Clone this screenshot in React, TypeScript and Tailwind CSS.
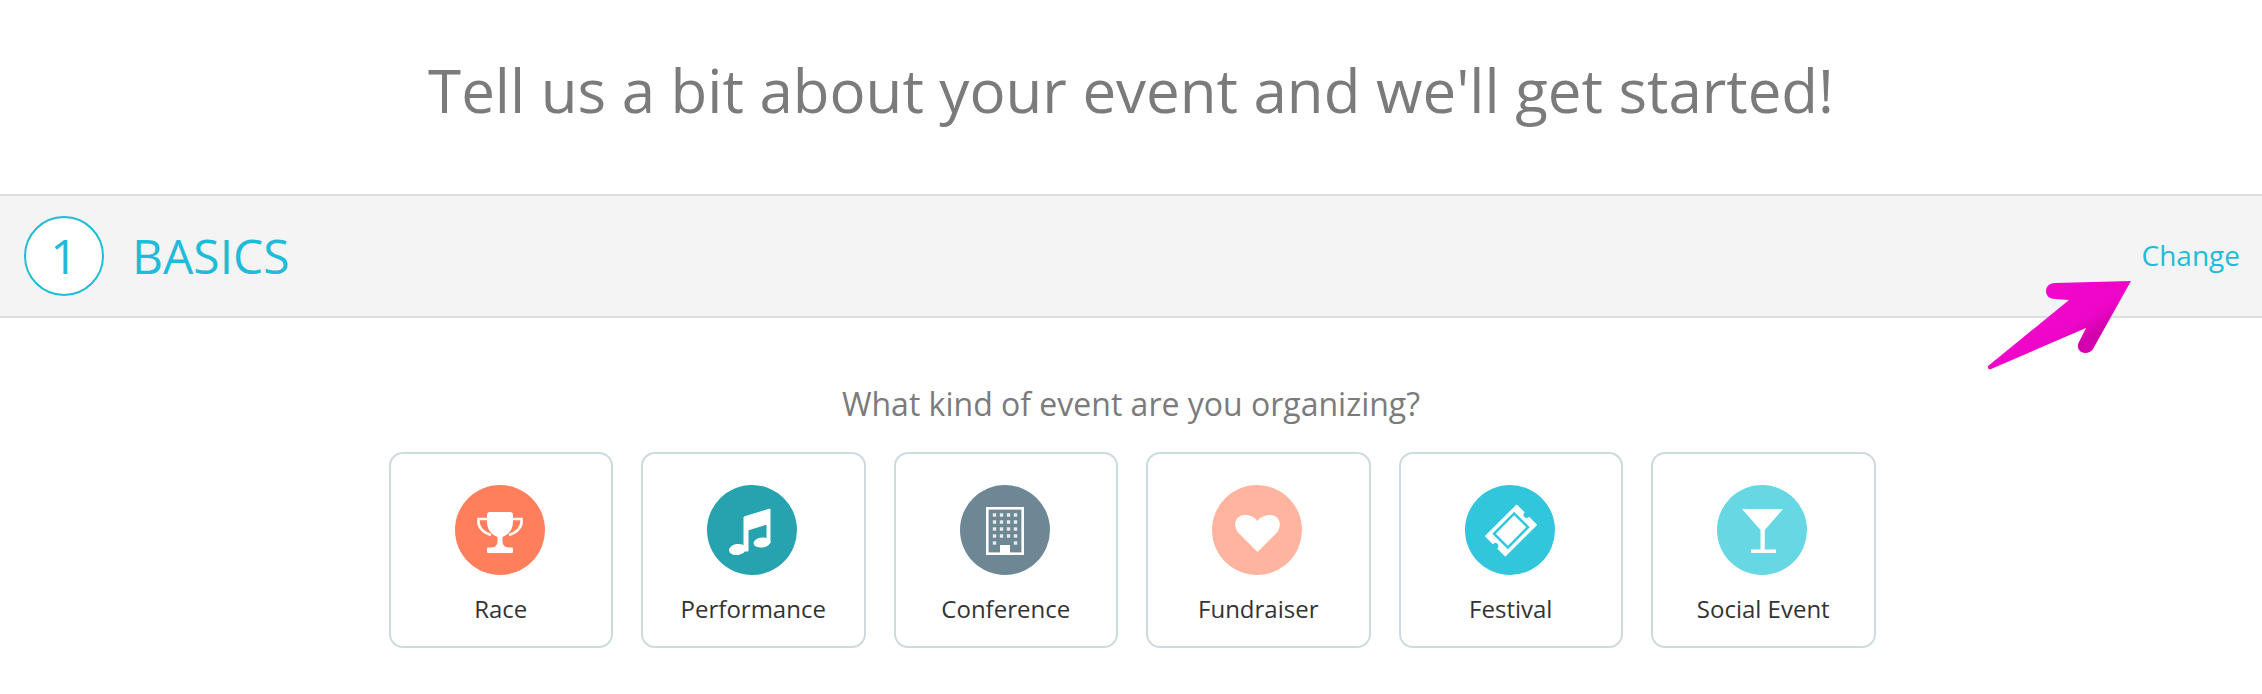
const F = "font-['Open_Sans',sans-serif]";

function Trophy() {
  return (
    <svg viewBox="0 0 90 90" className="h-[90px] w-[90px]">
      <path d="M35 27H55C57 27 58 28 58 30V37C58 45 53 50 47.500 52V57C47.500 60 50 62 53 63H37C40 62 42.500 60 42.500 57V52C37 50 32 45 32 37V30C32 28 33 27 35 27Z" fill="#fff" />
      <path d="M33 34H23.500C22.500 42 27 47 36 50M57 34H66.500C67.500 42 63 47 54 50" fill="none" stroke="#fff" strokeWidth="2.600" />
      <rect x="32" y="62.500" width="26" height="5.500" rx="1" fill="#fff" />
    </svg>
  );
}

function Note() {
  return (
    <svg viewBox="0 0 90 90" className="h-[90px] w-[90px]">
      <path d="M37 32L63 24V58H60V39L41 45V66H37Z" fill="#fff" stroke="#fff" strokeWidth="1" strokeLinejoin="round" />
      <ellipse cx="30.500" cy="64.500" rx="8.500" ry="5.500" fill="#fff" transform="rotate(-8 30.500 64.500)" />
      <ellipse cx="55" cy="57.500" rx="8.500" ry="5" fill="#fff" transform="rotate(-8 55 57.500)" />
    </svg>
  );
}

function Building() {
  const dots: [number, number][] = [];
  for (let r = 0; r < 5; r++) {
    for (let c = 0; c < 4; c++) {
      if (r === 4 && (c === 1 || c === 2)) continue;
      dots.push([34.500 + c * 7, 30 + r * 7]);
    }
  }
  return (
    <svg viewBox="0 0 90 90" className="h-[90px] w-[90px]">
      <rect x="27.300" y="23.300" width="35.400" height="45.400" fill="none" stroke="#fff" strokeWidth="2.600" />
      {dots.map(([x, y]) => (
        <rect key={`${x}-${y}`} x={x - 1.700} y={y - 1.700} width="3.400" height="3.400" fill="#fff" opacity="0.85" />
      ))}
      <path d="M40 69V60H50V69Z" fill="#fff" />
    </svg>
  );
}

function Heart() {
  return (
    <svg viewBox="0 0 90 90" className="h-[90px] w-[90px]">
      <path d="M45.500 67L27 48.500C20 41 23 30 33 30C38.500 30 43 32.500 45.500 36C48 32.500 52.500 30 58 30C68 30 71 41 64 48.500Z" fill="#fff" />
    </svg>
  );
}

function Ticket() {
  return (
    <svg viewBox="0 0 90 90" className="h-[90px] w-[90px]">
      <g transform="rotate(-45 46 45.500)">
        <path d="M24 31.500H68V42A3.500 3.500 0 0 0 68 49V59.500H24V49A3.500 3.500 0 0 0 24 42Z" fill="#fff" stroke="#fff" strokeWidth="1" strokeLinejoin="round" />
        <rect x="30.500" y="34.500" width="31" height="22" fill="#32c6dc" />
        <rect x="33" y="37" width="26" height="17" fill="#fff" />
      </g>
    </svg>
  );
}

function Martini() {
  return (
    <svg viewBox="0 0 90 90" className="h-[90px] w-[90px]">
      <path d="M25 24H66L47.800 45V65H43.500V45Z" fill="#fff" />
      <rect x="34" y="64.500" width="25" height="3.500" fill="#fff" />
    </svg>
  );
}

const events = [
  { label: "Race", color: "bg-[#ff7e5c]", icon: <Trophy /> },
  { label: "Performance", color: "bg-[#27a2af]", icon: <Note /> },
  { label: "Conference", color: "bg-[#6e8794]", icon: <Building /> },
  { label: "Fundraiser", color: "bg-[#ffb4a0]", icon: <Heart /> },
  { label: "Festival", color: "bg-[#32c6dc]", icon: <Ticket /> },
  { label: "Social Event", color: "bg-[#66d7e3]", icon: <Martini /> },
];

export default function App() {
  return (
    <div className={`${F} relative h-[694px] w-[2262px] overflow-hidden bg-white`}>
      <h1 className="pt-[46px] text-center text-[60px] leading-[88px] font-normal text-[#7b7b7b]">
        Tell us a bit about your event and we'll get started!
      </h1>
      <div className="mt-[60px] flex h-[124px] items-center justify-between border-y-2 border-[#dddddd] bg-[#f4f4f4] pr-[22px] pl-[24px]">
        <div className="flex items-center gap-[28px]">
          <div className="flex h-[80px] w-[80px] items-center justify-center rounded-full border-2 border-[#1fbcd9] bg-white text-[48px] font-normal text-[#1fbcd9]">
            1
          </div>
          <span className="text-[48px] font-normal text-[#1fbcd9]">BASICS</span>
        </div>
        <a className="-mt-[2px] text-[28px] text-[#1fbcd9]">Change</a>
      </div>
      <p className="mt-[64px] text-center text-[32px] leading-[44px] text-[#7b7b7b]">
        What kind of event are you organizing?
      </p>
      <div className="mt-[26px] ml-[2px] flex justify-center gap-[28px]">
        {events.map((e) => (
          <div
            key={e.label}
            className="flex h-[196px] w-[224.500px] flex-col items-center rounded-[14px] border-2 border-[#cddbe0] bg-white pt-[31px]"
          >
            <div className={`${e.color} mr-[2px] h-[90px] w-[90px] rounded-full`}>{e.icon}</div>
            <span className="mt-[17px] text-[24px] leading-[33px] text-[#333333]">{e.label}</span>
          </div>
        ))}
      </div>
      <svg viewBox="0 0 170 100" className="absolute top-[275px] left-[1980px] h-[100px] w-[170px]">
        <defs>
          <linearGradient id="arrow" x1="0" y1="0" x2="1" y2="1">
            <stop offset="0" stopColor="#f506cf" />
            <stop offset="0.55" stopColor="#ee06c8" />
            <stop offset="0.68" stopColor="#d000ab" />
            <stop offset="1" stopColor="#ea04c4" />
          </linearGradient>
        </defs>
        <path
          d="M151 6L75 8C69 8 66 12 66 16C66 21 70 24 75 24L89 25L8 91Q7.500 94 10 94.500L106 53L99 67C96 72 99 78 105 78C109 78 112 76 113 74Z"
          fill="url(#arrow)"
        />
      </svg>
    </div>
  );
}
